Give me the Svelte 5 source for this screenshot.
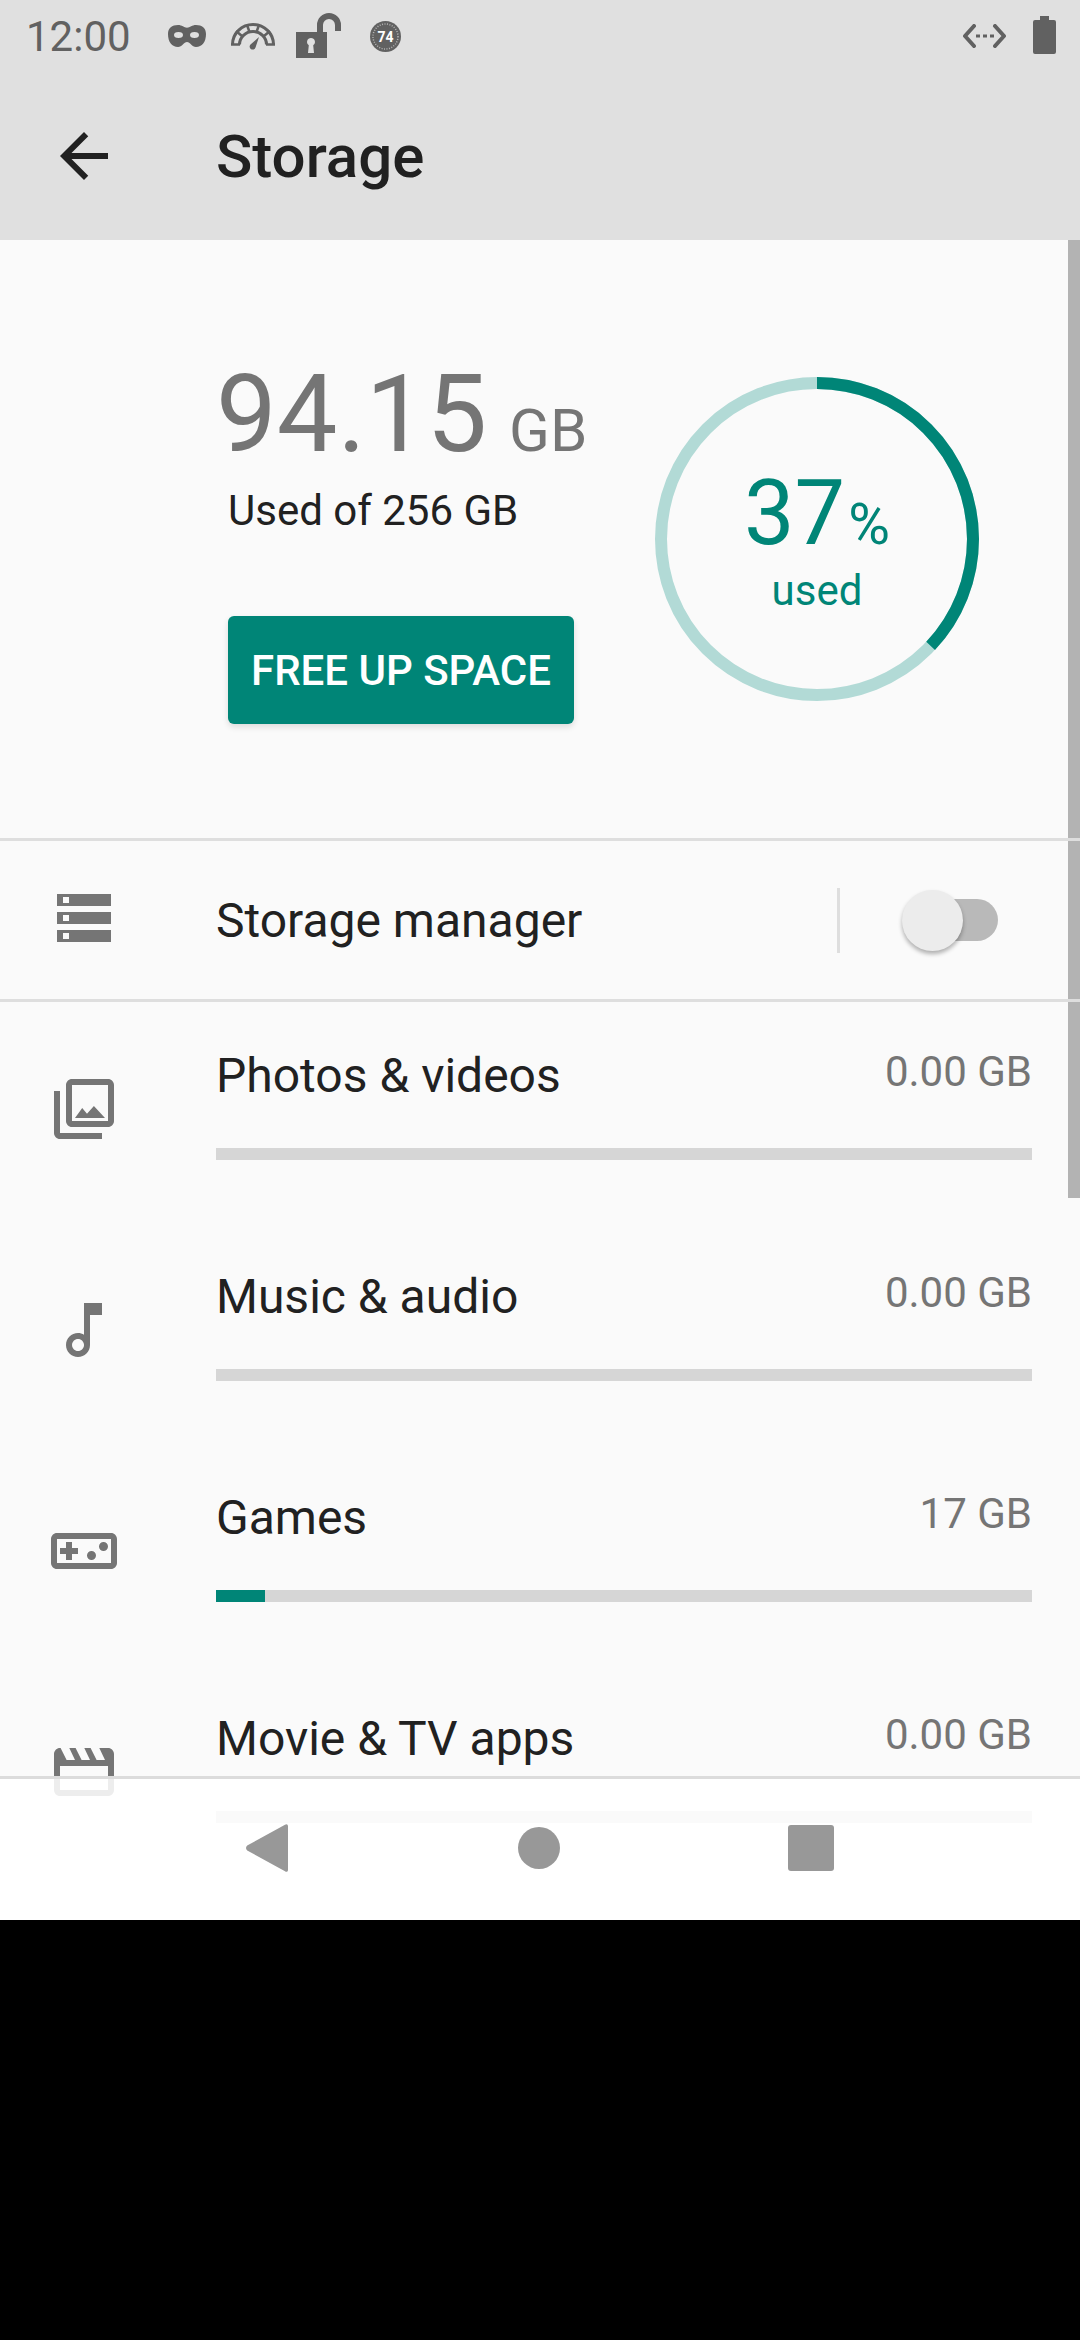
<script>
	const rows = [
		{ id: 'photos', title: 'Photos & videos', value: '0.00 GB', used: 0 },
		{ id: 'music', title: 'Music & audio', value: '0.00 GB', used: 0 },
		{ id: 'games', title: 'Games', value: '17 GB', used: 6 },
		{ id: 'movies', title: 'Movie & TV apps', value: '0.00 GB', used: 0 }
	];

	const icons = {
		photos: 'M22 16V4c0-1.100-.9-2-2-2H8c-1.100 0-2 .9-2 2v12c0 1.100.9 2 2 2h12c1.100 0 2-.9 2-2zM8 4h12v12H8V4zm1 11l2.400-3.300 1.600 1.900 2.300-2.600 3.700 4H9zM2 6v14c0 1.100.9 2 2 2h14v-2H4V6H2z',
		music: 'M12 3l.01 10.550c-.59-.34-1.270-.54-2.010-.54C7.790 13.010 6 14.800 6 17s1.790 4 4 4 4-1.790 4-4V7h4V3h-6zm-1.990 16c-1.100 0-2-.9-2-2s.9-2 2-2 2 .9 2 2-.9 2-2 2z',
		games: 'M21 6H3c-1.100 0-2 .9-2 2v8c0 1.100.9 2 2 2h18c1.100 0 2-.9 2-2V8c0-1.100-.9-2-2-2zm0 10H3V8h18v8zM6 15h2v-2h2v-2H8V9H6v2H4v2h2zM14.500 12a1.500 1.500 0 1 0 0 3 1.500 1.500 0 0 0 0-3zM18.500 9a1.500 1.500 0 1 0 0 3 1.500 1.500 0 0 0 0-3z',
		movies: 'M4 4h16c1.100 0 2 .9 2 2v12c0 1.100-.9 2-2 2H4c-1.100 0-2-.9-2-2V6c0-1.100.9-2 2-2zM4 10v8h16v-8H4zM4.200 4h2.900L9 8H6.200L4.200 4zM9.200 4h2.900L14 8h-2.800L9.200 4zM14.200 4h2.900L19 8h-2.800L14.200 4z'
	};

	// 37% of the ring
	const radius = 156;
	const circumference = 2 * Math.PI * radius;
	const usedLength = circumference * 0.37;
</script>

<div class="screen">
	<header class="top">
		<div class="status">
			<span class="time">12:00</span>
			<svg class="st-mask" width="38" height="22" viewBox="0 0 38 22">
				<path fill-rule="evenodd" d="M10 0c4 0 6 2.700 9 2.700S24 0 28 0c6 0 10 3 10 9 0 8-4 13-10 13-4 0-6-5-9-5s-5 5-9 5C4 22 0 17 0 9 0 3 4 0 10 0zM6 10a4.500 3 0 1 0 9 0a4.500 3 0 1 0-9 0zM22 10a4.500 3 0 1 0 9 0a4.500 3 0 1 0-9 0z" />
			</svg>
			<svg class="st-gauge" width="44" height="27" viewBox="0 0 44 27">
				<path d="M1.500 21.500a20.500 20 0 0 1 41 0" fill="none" stroke="#616161" stroke-width="3" />
				<path d="M8.500 21.500a13.500 13 0 0 1 27 0" fill="none" stroke="#616161" stroke-width="3" />
				<path d="M0 21.500h9M35 21.500h9M5 8l6 5M39 8l-6 5M16 2l2.500 7M28 2l-2.500 7" fill="none" stroke="#616161" stroke-width="2.500" />
				<path d="M28 14l-3.500 10.500a3 3 0 1 1-5-3z" />
			</svg>
			<svg class="st-lock" width="45" height="45" viewBox="0 0 45 45">
				<path d="M24 19V12a9 9 0 0 1 18 0v6" fill="none" stroke="#616161" stroke-width="6" />
				<path fill-rule="evenodd" d="M0 19h31v26H0zM15 25a4 4 0 0 0-2.200 7.300L12 40h6l-.8-7.700A4 4 0 0 0 15 25z" />
			</svg>
			<svg class="st-badge" width="31" height="31" viewBox="0 0 31 31">
				<circle cx="15.500" cy="15.500" r="15.500" />
				<circle cx="15.500" cy="15.500" r="12.500" fill="none" stroke="#e0e0e0" stroke-width="1.500" stroke-dasharray="1 1.500" opacity="0.65" />
				<text x="15.500" y="20.500" text-anchor="middle" class="badge-text">74</text>
			</svg>
			<div class="st-right">
				<svg class="st-data" width="43" height="24" viewBox="0 0 43 24">
					<path d="M11 2L2 12l9 10M32 2l9 10-9 10" fill="none" stroke="#616161" stroke-width="4" stroke-linecap="round" stroke-linejoin="round" />
					<path d="M13 10.500h4v3h-4zM20 10.500h4v3h-4zM27 10.500h4v3h-4z" />
				</svg>
				<svg class="st-battery" width="23" height="38" viewBox="0 0 23 38">
					<path d="M7 0h9v4h5a2 2 0 0 1 2 2v30a2 2 0 0 1-2 2H2a2 2 0 0 1-2-2V6a2 2 0 0 1 2-2h5z" />
				</svg>
			</div>
		</div>
		<div class="appbar">
			<svg class="back" width="72" height="72" viewBox="0 0 24 24">
				<path d="M20 11H7.830l5.590-5.590L12 4l-8 8 8 8 1.410-1.410L7.830 13H20v-2z" />
			</svg>
			<h1>Storage</h1>
		</div>
	</header>

	<main class="content">
		<section class="hero">
			<div class="summary">
				<div class="amount">94.15 <span class="unit">GB</span></div>
				<div class="of">Used of 256 GB</div>
				<button class="free">FREE UP SPACE</button>
			</div>
			<div class="ring">
				<svg width="324" height="324" viewBox="0 0 324 324">
					<circle cx="162" cy="162" r={radius} fill="none" stroke="#b2dad6" stroke-width="12" />
					<circle
						cx="162"
						cy="162"
						r={radius}
						fill="none"
						stroke="#008577"
						stroke-width="12"
						stroke-dasharray="{usedLength} {circumference}"
						transform="rotate(-90 162 162)"
					/>
				</svg>
				<div class="ring-text">
					<div class="pct">37<span class="pct-sign">%</span></div>
					<div class="used">used</div>
				</div>
			</div>
		</section>

		<div class="divider"></div>

		<section class="manager">
			<svg class="row-icon" width="72" height="72" viewBox="0 0 72 72">
				<path fill-rule="evenodd" d="M9 12h54v12H9zM15 15v6h6v-6zM9 30h54v12H9zM15 33v6h6v-6zM9 48h54v12H9zM15 51v6h6v-6z" />
			</svg>
			<div class="manager-title">Storage manager</div>
			<div class="sep"></div>
			<div class="toggle">
				<div class="track"></div>
				<div class="thumb"></div>
			</div>
		</section>

		<div class="divider"></div>

		{#each rows as row}
			<section class="row">
				<svg class="row-icon" width="72" height="72" viewBox="0 0 24 24">
					<path fill-rule="evenodd" d={icons[row.id]} />
				</svg>
				<div class="row-body">
					<div class="row-head">
						<span class="row-title">{row.title}</span>
						<span class="row-value">{row.value}</span>
					</div>
					<div class="bar">
						<div class="bar-fill" style="width: {row.used}%"></div>
					</div>
				</div>
			</section>
		{/each}
	</main>

	<div class="scrollbar"></div>

	<nav class="nav">
		<svg width="42" height="48" viewBox="0 0 42 48">
			<path d="M39 .8c1.500-1.200 3-.5 3 1.500v43.400c0 2-1.500 2.700-3 1.500L1.200 26.500c-1.600-1.400-1.600-3.600 0-5z" />
		</svg>
		<svg width="42" height="42" viewBox="0 0 42 42">
			<circle cx="21" cy="21" r="21" />
		</svg>
		<svg width="46" height="46" viewBox="0 0 46 46">
			<rect width="46" height="46" rx="3" />
		</svg>
	</nav>
</div>

<style>
	:global(body) {
		margin: 0;
		background: #000;
	}

	.screen {
		position: relative;
		width: 1080px;
		height: 1920px;
		overflow: hidden;
		background: #fafafa;
		font-family: Roboto, "Liberation Sans", sans-serif;
		color: #212121;
	}

	.top {
		background: #e0e0e0;
	}

	.status {
		display: flex;
		align-items: flex-start;
		height: 84px;
		fill: #616161;
	}

	.time {
		margin: 13px 0 0 26px;
		font-size: 42px;
		line-height: 48px;
		color: #616161;
	}

	.st-mask {
		margin: 25px 0 0 37px;
	}

	.st-gauge {
		margin: 23px 0 0 25px;
	}

	.st-lock {
		margin: 13px 0 0 21px;
	}

	.st-badge {
		margin: 21px 0 0 29px;
	}

	.badge-text {
		font-size: 14px;
		font-weight: 700;
		fill: #fff;
	}

	.st-right {
		display: flex;
		margin-left: auto;
		padding-right: 24px;
	}

	.st-data {
		margin: 24px 27px 0 0;
	}

	.st-battery {
		margin-top: 16px;
	}

	.appbar {
		display: flex;
		align-items: center;
		height: 156px;
		box-sizing: border-box;
		padding-bottom: 12px;
	}

	.back {
		margin-left: 48px;
		fill: #212121;
	}

	h1 {
		margin: 2px 0 0 96px;
		font-size: 60px;
		font-weight: 500;
		line-height: 72px;
	}

	.content {
		height: 1680px;
		overflow: hidden;
	}

	.hero {
		display: flex;
		height: 598px;
		box-sizing: border-box;
		padding: 120px 0 0 216px;
	}

	.summary {
		width: 439px;
	}

	.amount {
		font-size: 108px;
		line-height: 108px;
		color: #757575;
		white-space: nowrap;
	}

	.unit {
		margin-left: -5px;
		font-size: 60px;
		line-height: 0;
	}

	.of {
		margin: 19px 0 0 12px;
		font-size: 42px;
		line-height: 48px;
	}

	.free {
		display: block;
		width: 346px;
		height: 108px;
		margin: 81px 0 0 12px;
		padding: 0;
		border: none;
		border-radius: 6px;
		background: #008577;
		box-shadow: 0 3px 6px rgba(0, 0, 0, 0.12);
		color: #fff;
		font-family: inherit;
		font-size: 42px;
		font-weight: 500;
	}

	.ring {
		position: relative;
		width: 324px;
		height: 324px;
		margin-top: 17px;
	}

	.ring svg {
		display: block;
	}

	.ring-text {
		position: absolute;
		top: 92px;
		left: 0;
		right: 0;
		text-align: center;
		color: #008577;
	}

	.pct {
		font-size: 90px;
		line-height: 90px;
	}

	.pct-sign {
		margin-left: 3px;
		font-size: 57px;
		line-height: 0;
	}

	.used {
		margin-top: 8px;
		font-size: 42px;
		line-height: 48px;
	}

	.divider {
		position: relative;
		z-index: 1;
		height: 3px;
		background: #dedede;
	}

	.manager {
		display: flex;
		align-items: center;
		height: 158px;
	}

	.row-icon {
		flex: none;
		fill: #757575;
		margin-left: 48px;
	}

	.manager .row-icon {
		margin-top: -4px;
	}

	.manager-title {
		width: 621px;
		margin-left: 96px;
		font-size: 48px;
	}

	.sep {
		width: 3px;
		height: 65px;
		background: #dedede;
	}

	.toggle {
		position: relative;
		width: 96px;
		height: 61px;
		margin-left: 62px;
	}

	.track {
		position: absolute;
		top: 9px;
		right: 0;
		width: 84px;
		height: 42px;
		border-radius: 21px;
		background: #b9b9b9;
	}

	.thumb {
		position: absolute;
		top: 0;
		left: 0;
		width: 61px;
		height: 61px;
		border-radius: 50%;
		background: #ececec;
		box-shadow: 0 3px 4px rgba(0, 0, 0, 0.3);
	}

	.row {
		display: flex;
		align-items: flex-start;
		height: 221px;
	}

	.row > .row-icon {
		margin-top: 71px;
	}

	.row-body {
		width: 816px;
		margin-left: 96px;
		padding-top: 46px;
	}

	.row-head {
		display: flex;
		justify-content: space-between;
		height: 100px;
	}

	.row-title {
		font-size: 48px;
		line-height: 56px;
	}

	.row-value {
		font-size: 42px;
		line-height: 48px;
		color: #757575;
	}

	.bar {
		height: 12px;
		background: #d6d6d6;
	}

	.bar-fill {
		height: 100%;
		background: #008577;
	}

	.scrollbar {
		position: absolute;
		top: 240px;
		right: 0;
		width: 12px;
		height: 958px;
		background: #b3b3b3;
	}

	.nav {
		position: absolute;
		z-index: 2;
		left: 0;
		right: 0;
		bottom: 0;
		height: 144px;
		box-sizing: border-box;
		display: grid;
		grid-template-columns: repeat(3, 272px);
		justify-items: center;
		align-items: center;
		padding: 0 0 3px 131px;
		border-top: 3px solid #dcdcdc;
		background: rgba(255, 255, 255, 0.87);
		fill: #989898;
	}
</style>
